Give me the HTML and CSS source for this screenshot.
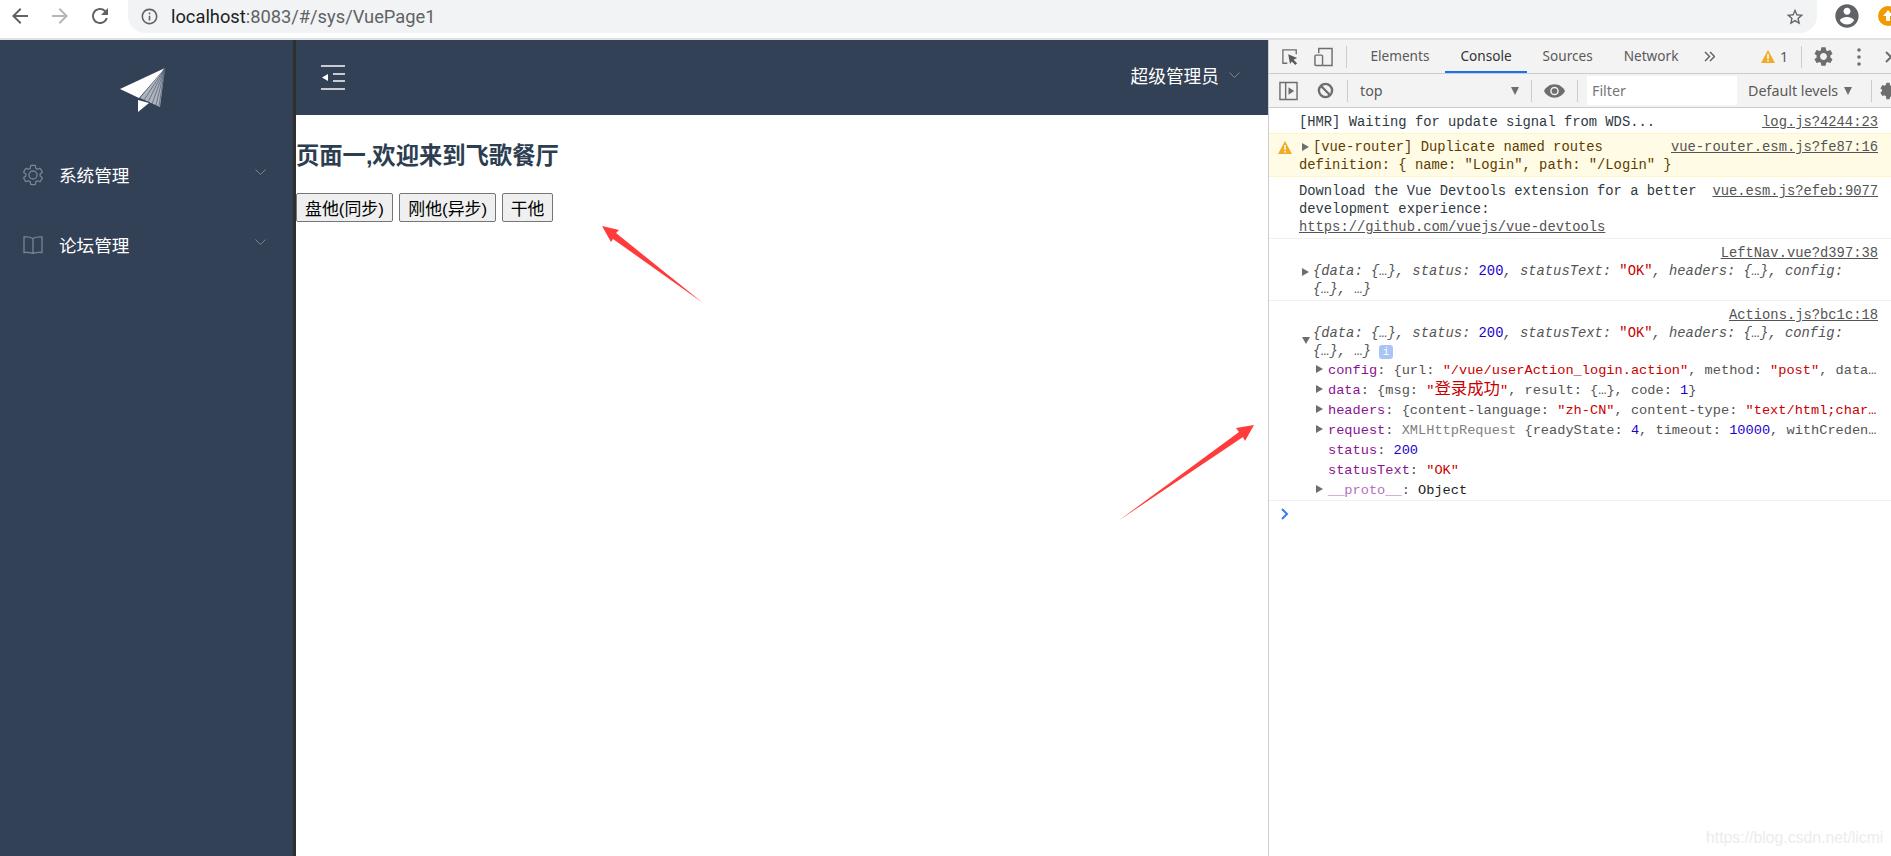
FILE: index.html
```html
<!DOCTYPE html>
<html lang="en">
<head>
    <meta charset="UTF-8">
    <title>VuePage1</title>
    <link rel="stylesheet" href="styles.css">
</head>
<body>

<div class="browser-bar">
    <svg class="nav-icon" viewBox="0 0 24 24"><path fill="#5f6368" d="M20 11H7.83l5.59-5.59L12 4l-8 8 8 8 1.41-1.41L7.83 13H20v-2z"/></svg>
    <svg class="nav-icon" viewBox="0 0 24 24"><path fill="#b4b7ba" d="M4 13h12.17l-5.59 5.59L12 20l8-8-8-8-1.41 1.41L16.17 11H4v2z"/></svg>
    <svg class="nav-icon" viewBox="0 0 24 24"><path fill="#5f6368" d="M17.65 6.35A7.958 7.958 0 0 0 12 4c-4.42 0-7.99 3.58-7.99 8s3.57 8 7.99 8c3.73 0 6.84-2.55 7.73-6h-2.08A5.99 5.99 0 0 1 12 18c-3.31 0-6-2.69-6-6s2.69-6 6-6c1.66 0 3.14.69 4.22 1.78L13 11h7V4l-2.35 2.35z"/></svg>
    <div class="address">
        <svg class="info-icon" viewBox="0 0 24 24"><path fill="#5f6368" d="M11 7h2v2h-2zm0 4h2v6h-2zm1-9C6.48 2 2 6.48 2 12s4.48 10 10 10 10-4.48 10-10S17.52 2 12 2zm0 18c-4.41 0-8-3.59-8-8s3.59-8 8-8 8 3.59 8 8-3.59 8-8 8z"/></svg>
        <span class="url"><span class="url-host">localhost</span>:8083/#/sys/VuePage1</span>
        <svg class="star-icon" viewBox="0 0 24 24"><path fill="#5f6368" d="M22 9.24l-7.19-.62L12 2 9.19 8.63 2 9.24l5.46 4.73L5.82 21 12 17.27 18.18 21l-1.63-7.03L22 9.24zM12 15.4l-3.76 2.27 1-4.28-3.32-2.88 4.38-.38L12 6.1l1.71 4.04 4.38.38-3.32 2.88 1 4.28L12 15.4z"/></svg>
    </div>
    <svg class="avatar" viewBox="0 0 24 24"><path fill="#5f6368" d="M12 2C6.48 2 2 6.48 2 12s4.48 10 10 10 10-4.48 10-10S17.52 2 12 2zm0 3c1.66 0 3 1.34 3 3s-1.34 3-3 3-3-1.34-3-3 1.34-3 3-3zm0 14.2c-2.5 0-4.71-1.28-6-3.22.03-1.99 4-3.08 6-3.08 1.99 0 5.97 1.09 6 3.08-1.29 1.94-3.5 3.22-6 3.22z"/></svg>
    <svg class="update-badge" viewBox="0 0 20 20"><circle cx="10" cy="10" r="10" fill="#f29900"/><path fill="#fff" d="M10 4l5 6h-3v5H8v-5H5z"/></svg>
</div>

<div class="window">
    <div class="app">
        <aside class="sidebar">
            <div class="logo">
                <svg width="46" height="46" viewBox="0 0 46 46">
                    <polygon fill="#fff" points="0,22 45,1 19,31"/>
                    <polygon fill="#fff" points="18,33 18,45 29,36"/>
                    <polygon fill="#aeb4bd" points="45,1 40,40 20,31"/>
                    <path stroke="#4c5a70" stroke-width=".7" d="M45 1L24 33M45 1L28 35M45 1L32 37M45 1L36 38M45 1L39 39"/>
                </svg>
            </div>
            <div class="menu-item">
                <svg class="menu-icon" viewBox="0 0 24 24"><path fill="none" stroke="#7a8492" stroke-width="1.3" d="M19.14 12.94c.04-.3.06-.61.06-.94 0-.32-.02-.64-.07-.94l2.03-1.58a.49.49 0 0 0 .12-.61l-1.92-3.32a.488.488 0 0 0-.59-.22l-2.39.96c-.5-.38-1.03-.7-1.62-.94l-.36-2.54a.484.484 0 0 0-.48-.41h-3.84c-.24 0-.43.17-.47.41l-.36 2.54c-.59.24-1.13.57-1.62.94l-2.39-.96c-.22-.08-.47 0-.59.22L2.74 8.87c-.12.21-.08.47.12.61l2.03 1.58c-.05.3-.09.63-.09.94s.02.64.07.94l-2.03 1.58a.49.49 0 0 0-.12.61l1.92 3.32c.12.22.37.29.59.22l2.39-.96c.5.38 1.03.7 1.62.94l.36 2.54c.05.24.24.41.48.41h3.84c.24 0 .44-.17.47-.41l.36-2.54c.59-.24 1.13-.56 1.62-.94l2.39.96c.22.08.47 0 .59-.22l1.92-3.32c.12-.22.07-.47-.12-.61l-2.01-1.58z"/><circle cx="12" cy="12" r="4" fill="none" stroke="#7a8492" stroke-width="1.3"/></svg>
                <span class="menu-label">系统管理</span>
                <svg class="chevron" viewBox="0 0 11 6"><path fill="none" stroke="#7a8492" d="M.5.5L5.5 5.5 10.500.5"/></svg>
            </div>
            <div class="menu-item">
                <svg class="menu-icon book" viewBox="0 0 20 18"><path fill="none" stroke="#7a8492" stroke-width="1.3" d="M10 2.500C7.500 1 4 .8 1 1v15.500c3-.2 6.500 0 9 1 2.500-1 6-1.200 9-1V1c-3-.2-6.500 0-9 1.500zm0 0v15"/></svg>
                <span class="menu-label">论坛管理</span>
                <svg class="chevron" viewBox="0 0 11 6"><path fill="none" stroke="#7a8492" d="M.5.5L5.5 5.5 10.500.5"/></svg>
            </div>
        </aside>
        <main class="main">
            <header class="app-header">
                <svg width="24" height="25" viewBox="0 0 24 25"><path stroke="#c8ccd2" stroke-width="2" d="M0 1h24M12 9h12M12 16h12M0 24h24"/><polygon fill="#fff" points="1,12.500 7,9 7,16"/></svg>
                <span class="user">超级管理员</span>
                <svg class="chevron" viewBox="0 0 11 6"><path fill="none" stroke="#7a8492" d="M.5.5L5.5 5.5 10.500.5"/></svg>
            </header>
            <h2 class="title">页面一,欢迎来到飞歌餐厅</h2>
            <div class="actions">
                <button>盘他(同步)</button>
                <button>刚他(异步)</button>
                <button>干他</button>
            </div>
        </main>
    </div>

    <div class="devtools">
        <div class="dt-tabs">
            <svg class="dt-icon inspect" viewBox="0 0 18 18"><path fill="none" stroke="#6e6e6e" stroke-width="1.500" d="M6 16H1V1h15v5"/><polygon fill="#5a5a5a" points="7,6 17,10 13,12 17,16 15,18 11,14 9,17"/></svg>
            <svg class="dt-icon device" viewBox="0 0 20 20"><path fill="none" stroke="#6e6e6e" stroke-width="1.500" d="M5 6V1h14v18H9"/><rect x="1" y="8" width="8" height="11" rx="1" fill="none" stroke="#6e6e6e" stroke-width="1.500"/></svg>
            <span class="dt-divider"></span>
            <span class="tab">Elements</span>
            <span class="tab active">Console</span>
            <span class="tab">Sources</span>
            <span class="tab">Network</span>
            <svg class="more" viewBox="0 0 11 11"><path fill="none" stroke="#5a5a5a" stroke-width="1.400" d="M1 1l4.500 4.500L1 10M6 1l4.500 4.500L6 10"/></svg>
            <svg class="warn-icon" viewBox="0 0 14 13"><polygon fill="#f2ab26" points="7,0 14,13 0,13"/><path stroke="#fff" stroke-width="1.500" d="M7 4v5M7 10v1.500"/></svg>
            <span class="warn-count">1</span>
            <span class="dt-divider"></span>
            <svg class="dt-gear" viewBox="0 0 24 24"><path fill="#6e6e6e" d="M19.14 12.94c.04-.3.06-.61.06-.94 0-.32-.02-.64-.07-.94l2.03-1.58a.49.49 0 0 0 .12-.61l-1.92-3.32a.488.488 0 0 0-.59-.22l-2.39.96c-.5-.38-1.03-.7-1.62-.94l-.36-2.54a.484.484 0 0 0-.48-.41h-3.84c-.24 0-.43.17-.47.41l-.36 2.54c-.59.24-1.13.57-1.62.94l-2.39-.96c-.22-.08-.47 0-.59.22L2.74 8.87c-.12.21-.08.47.12.61l2.03 1.58c-.05.3-.09.63-.09.94s.02.64.07.94l-2.03 1.58a.49.49 0 0 0-.12.61l1.92 3.32c.12.22.37.29.59.22l2.39-.96c.5.38 1.03.7 1.62.94l.36 2.54c.05.24.24.41.48.41h3.84c.24 0 .44-.17.47-.41l.36-2.54c.59-.24 1.13-.56 1.62-.94l2.39.96c.22.08.47 0 .59-.22l1.92-3.32c.12-.22.07-.47-.12-.61l-2.01-1.58zM12 15.6c-1.98 0-3.6-1.62-3.6-3.6s1.62-3.6 3.6-3.6 3.6 1.62 3.6 3.6-1.62 3.6-3.6 3.6z"/></svg>
            <svg class="dt-dots" viewBox="0 0 4 18"><circle cx="2" cy="2" r="1.800" fill="#6e6e6e"/><circle cx="2" cy="9" r="1.800" fill="#6e6e6e"/><circle cx="2" cy="16" r="1.800" fill="#6e6e6e"/></svg>
            <svg class="dt-close" viewBox="0 0 12 12"><path stroke="#6e6e6e" stroke-width="2" d="M1 1l10 10M11 1L1 11"/></svg>
        </div>
        <div class="dt-toolbar">
            <svg class="dt-icon sidebar-toggle" viewBox="0 0 20 20"><path fill="none" stroke="#6e6e6e" stroke-width="1.500" d="M1 1h18v18H1zM7 1v18"/><polygon fill="#6e6e6e" points="10,6 16,10 10,14"/></svg>
            <svg class="dt-icon clear" viewBox="0 0 18 18"><circle cx="9" cy="9" r="7" fill="none" stroke="#6e6e6e" stroke-width="2.500"/><path stroke="#6e6e6e" stroke-width="2.500" d="M4 4l10 10"/></svg>
            <span class="dt-divider"></span>
            <span class="context">top</span>
            <span class="caret caret-context"></span>
            <span class="dt-divider"></span>
            <svg class="eye" viewBox="0 0 22 14"><path fill="#6e6e6e" d="M11 0C6 0 2 3 0 7c2 4 6 7 11 7s9-3 11-7c-2-4-6-7-11-7z"/><circle cx="11" cy="7" r="4.500" fill="#f3f3f3"/><circle cx="11" cy="7" r="3" fill="#6e6e6e"/></svg>
            <span class="dt-divider"></span>
            <span class="filter">Filter</span>
            <span class="levels">Default levels</span>
            <span class="caret"></span>
            <span class="dt-divider"></span>
            <svg class="puzzle" viewBox="0 0 24 24"><path fill="#6e6e6e" d="M19.14 12.94c.04-.3.06-.61.06-.94 0-.32-.02-.64-.07-.94l2.03-1.58-2.400-4.150-2.390.96-2-1.150L14 2h-4l-.36 2.540-2 1.150-2.390-.96-2.400 4.150 2.030 1.580c-.05.3-.09.63-.09.94s.02.64.07.94l-2.030 1.580 2.400 4.150 2.390-.96 2 1.150L10 22h4l.36-2.540 2-1.150 2.390.96 2.400-4.150z"/></svg>
        </div>

        <div class="log">
            <div class="row row-first">
                <div class="line"><span>[HMR] Waiting for update signal from WDS...</span><span class="src">log.js?4244:23</span></div>
            </div>
            <div class="row row-warn">
                <svg class="warn-row-icon" viewBox="0 0 14 13"><polygon fill="#f2ab26" points="7,0 14,13 0,13"/><path stroke="#fff" stroke-width="1.500" d="M7 4v5M7 10v1.500"/></svg>
                <div class="line"><span class="warn-first"><i class="tri tri-warn"></i>[vue-router] Duplicate named routes</span><span class="src">vue-router.esm.js?fe87:16</span></div>
                <div class="line"><span>definition: { name: "Login", path: "/Login" }</span></div>
            </div>
            <div class="row">
                <div class="line"><span>Download the Vue Devtools extension for a better</span><span class="src">vue.esm.js?efeb:9077</span></div>
                <div class="line"><span>development experience:</span></div>
                <div class="line"><span class="link">https://github.com/vuejs/vue-devtools</span></div>
            </div>
            <div class="row row-obj">
                <div class="line line-end"><span class="src">LeftNav.vue?d397:38</span></div>
                <i class="tri tri-obj"></i>
                <div class="line obj"><span><span class="key-i">{data: {…}, status: </span><span class="num">200</span><span class="key-i">, statusText: </span><span class="str">"OK"</span><span class="key-i">, headers: {…}, config:</span></span></div>
                <div class="line obj"><span class="key-i">{…}, …}</span></div>
            </div>
            <div class="row row-open">
                <div class="line line-end"><span class="src">Actions.js?bc1c:18</span></div>
                <i class="tri-down"></i>
                <div class="line obj"><span><span class="key-i">{data: {…}, status: </span><span class="num">200</span><span class="key-i">, statusText: </span><span class="str">"OK"</span><span class="key-i">, headers: {…}, config:</span></span></div>
                <div class="line obj"><span class="key-i">{…}, …}</span><i class="info-badge">i</i></div>
                <div class="prop"><i class="tri"></i><span class="key">config</span>: {url: <span class="str">"/vue/userAction_login.action"</span>, method: <span class="str">"post"</span>, data…</div>
                <div class="prop"><i class="tri"></i><span class="key">data</span>: {msg: <span class="str">"<span class="cjk">登录成功</span>"</span>, result: {…}, code: <span class="num">1</span>}</div>
                <div class="prop"><i class="tri"></i><span class="key">headers</span>: {content-language: <span class="str">"zh-CN"</span>, content-type: <span class="str">"text/html;char…</span></div>
                <div class="prop"><i class="tri"></i><span class="key">request</span>: <span class="type">XMLHttpRequest</span> {readyState: <span class="num">4</span>, timeout: <span class="num">10000</span>, withCreden…</div>
                <div class="prop"><span class="key">status</span>: <span class="num">200</span></div>
                <div class="prop"><span class="key">statusText</span>: <span class="str">"OK"</span></div>
                <div class="prop"><i class="tri"></i><span class="key-dim">__proto__</span>: <span class="plain">Object</span></div>
            </div>
            <svg class="prompt" viewBox="0 0 8 12"><path fill="none" stroke="#367cf1" stroke-width="2" d="M1 1l5 5-5 5"/></svg>
        </div>
    </div>
</div>

<!-- red arrows drawn over the screenshot -->
<svg class="arrows" width="1891" height="856">
    <polygon fill="#ff3b3b" points="602,226 619,230 616,233 703,303 613,239 611,242"/>
    <polygon fill="#ff3b3b" points="1254,425 1236,428 1239,432 1118,521 1243,437 1245,441"/>
</svg>
<div class="watermark">https://blog.csdn.net/licmi</div>

</body>
</html>
```
FILE: styles.css
```css
html, body {
    margin: 0;
    padding: 0;
    height: 856px;
    overflow: hidden;
    background: #fff;
}
body {
    font-family: "Noto Sans", "Noto Sans CJK SC", sans-serif;
}
svg {
    display: block;
    flex: none;
}

/* browser chrome */
.browser-bar {
    height: 38px;
    display: flex;
    align-items: flex-start;
    gap: 16px;
    padding-left: 8px;
    overflow: hidden;
    box-sizing: border-box;
}
.nav-icon {
    width: 24px;
    height: 24px;
    margin-top: 4px;
}
.address {
    width: 1689px;
    height: 33px;
    flex: none;
    background: #f1f3f4;
    border-radius: 0 0 17px 17px;
    display: flex;
    align-items: center;
    padding: 0 12px;
    box-sizing: border-box;
    gap: 12px;
}
.info-icon {
    width: 19px;
    height: 19px;
}
.url {
    font-family: Roboto, sans-serif;
    font-size: 18.3px;
    color: #5f6368;
    flex: 1;
}
.url-host {
    color: #202124;
}
.star-icon {
    width: 20px;
    height: 20px;
}
.avatar {
    width: 28px;
    height: 28px;
    margin-top: 2px;
}
.update-badge {
    width: 20px;
    height: 20px;
    margin-top: 6px;
    margin-left: 1px;
}

.window {
    height: 818px;
    border-top: 2px solid #dee1e6;
    box-sizing: border-box;
    display: flex;
}

/* vue app */
.app {
    width: 1268px;
    display: flex;
    flex: none;
}
.sidebar {
    width: 296px;
    box-sizing: border-box;
    background: #334157;
    border-right: 3px solid #2f2f2f;
}
.logo {
    height: 75px;
    display: flex;
    justify-content: center;
    padding: 27px 7px 0 0;
    box-sizing: border-box;
    margin-bottom: 25px;
}
.menu-item {
    height: 70px;
    display: flex;
    align-items: center;
    padding-left: 21px;
    color: #fff;
}
.menu-icon {
    width: 24px;
    height: 24px;
}
.book {
    width: 20px;
    height: 18px;
    margin: 0 2px;
}
.menu-label {
    font-size: 17.6px;
    margin: -2px 0 0 14px;
    width: 196px;
}
.chevron {
    width: 11px;
    height: 6px;
    margin-top: -6px;
}
.main {
    flex: 1;
    min-width: 0;
}
.app-header {
    height: 75px;
    background: #334157;
    display: flex;
    align-items: center;
    padding-left: 25px;
    padding-right: 28px;
}
.user {
    color: #fff;
    font-size: 17.7px;
    margin: -6px 10px 0 auto;
}
.title {
    margin: 0;
    padding-top: 27px;
    font-size: 23.3px;
    line-height: 28px;
    color: #2c3e50;
    font-family: "Liberation Sans", "Noto Sans CJK SC", sans-serif;
}
.actions {
    display: flex;
    gap: 6.5px;
    margin-top: 23px;
}
.actions button {
    height: 29px;
    padding: 0 8px;
    font-size: 16.9px;
    font-family: "Liberation Sans", "Noto Sans CJK SC", sans-serif;
    background: #efefef;
    color: #000;
    border: 1px solid #767676;
    border-radius: 2px;
    white-space: nowrap;
}
.actions button:last-child {
    margin-left: -1px;
}

/* devtools */
.devtools {
    width: 623px;
    flex: none;
    border-left: 1px solid #ccc;
    box-sizing: border-box;
    color: #303942;
    overflow: hidden;
}
.dt-tabs, .dt-toolbar {
    display: flex;
    align-items: center;
    background: #f3f3f3;
    border-bottom: 1px solid #ccc;
    font-size: 14.3px;
    color: #5a5a5a;
    white-space: nowrap;
    height: 34px;
    box-sizing: border-box;
}
.dt-divider {
    width: 1px;
    height: 22px;
    background: #ccc;
    flex: none;
}
.dt-icon {
    flex: none;
}
.inspect {
    width: 16px;
    height: 18px;
    margin-left: 13px;
}
.device {
    width: 19px;
    height: 20px;
    margin-left: 16px;
    margin-right: 13px;
}
.tab {
    height: 33px;
    line-height: 32px;
    padding: 0 15.5px;
    box-sizing: border-box;
    flex: none;
    font-size: 13.6px;
}
.dt-divider + .tab {
    margin-left: 8px;
}
.tab.active {
    color: #333;
    border-bottom: 2px solid #1a73e8;
}
.more {
    width: 11px;
    height: 11px;
    margin-left: 10px;
}
.warn-icon {
    width: 14px;
    height: 13px;
    margin-left: 46px;
}
.warn-count {
    margin-left: 5px;
    margin-right: 13px;
    flex: none;
}
.dt-gear {
    width: 23px;
    height: 23px;
    margin-left: 10px;
}
.dt-dots {
    width: 4px;
    height: 18px;
    margin-left: 22px;
}
.dt-close {
    width: 12px;
    height: 12px;
    margin-left: 24px;
}
.sidebar-toggle {
    width: 19px;
    height: 20px;
    margin-left: 10px;
}
.clear {
    width: 17px;
    height: 17px;
    margin-left: 19px;
    margin-right: 13px;
}
.context {
    margin-left: 12px;
    width: 151px;
    flex: none;
}
.caret {
    width: 0;
    height: 0;
    border-left: 4.5px solid transparent;
    border-right: 4.5px solid transparent;
    border-top: 8px solid #6e6e6e;
    margin: 0 19px 0 6px;
    flex: none;
}
.caret-context {
    margin: 0 12px 0 0;
}
.eye {
    width: 21px;
    height: 14px;
    margin: 0 12px;
}
.filter {
    width: 150px;
    height: 29px;
    line-height: 29px;
    background: #fff;
    color: #777;
    padding-left: 5px;
    box-sizing: border-box;
    margin-left: 9px;
    margin-right: 11px;
    flex: none;
}
.levels {
    flex: none;
}
.puzzle {
    width: 20px;
    height: 20px;
    margin-left: 6px;
}

/* console output */
.log {
    font-family: "Liberation Mono", "Noto Sans CJK SC", monospace;
    font-size: 13.65px;
    position: relative;
    white-space: nowrap;
}
.row {
    position: relative;
    padding: 6px 13px 1px 30px;
    border-bottom: 1px solid #f0f0f0;
    box-sizing: border-box;
}
.row-first {
    height: 25px;
    border-bottom: 0;
}
.row-warn {
    height: 44px;
    background: #fffbe5;
    border-top: 1px solid #fff5c2;
    border-bottom: 1px solid #fff5c2;
    color: #5c3b00;
    padding-top: 5px;
}
.row-open {
    height: 200px;
    padding-bottom: 0;
}
.line {
    height: 18px;
    line-height: 18px;
    font-size: 13.8px;
    display: flex;
    justify-content: space-between;
}
.line-end {
    justify-content: flex-end;
}
.obj {
    margin-left: 14px;
    justify-content: flex-start;
}
.src {
    color: #545454;
    text-decoration: underline;
}
.link {
    color: #545454;
    text-decoration: underline;
}
.warn-first {
    padding-left: 3px;
}
.warn-row-icon {
    position: absolute;
    left: 9px;
    top: 7px;
    width: 14px;
    height: 13px;
}
.tri {
    display: inline-block;
    width: 0;
    height: 0;
    border-top: 4.5px solid transparent;
    border-bottom: 4.5px solid transparent;
    border-left: 7px solid #6e6e6e;
    margin-right: 5px;
}
.tri-warn {
    margin-right: 4px;
}
.tri-obj {
    position: absolute;
    left: 33px;
    top: 29px;
    margin: 0;
}
.tri-down {
    position: absolute;
    left: 33px;
    top: 36px;
    width: 0;
    height: 0;
    border-left: 4.5px solid transparent;
    border-right: 4.5px solid transparent;
    border-top: 7px solid #6e6e6e;
}
.key-i {
    font-style: italic;
}
.row-obj .key-i, .row-open .key-i {
    color: #545454;
}
.num {
    color: #1c00cf;
}
.str {
    color: #c80000;
}
.cjk {
    font-size: 16.4px;
    line-height: 0;
}
.key {
    color: #881391;
}
.key-dim {
    color: #b56fbd;
}
.type {
    color: #808080;
}
.plain {
    color: #222;
}
.prop {
    height: 20px;
    line-height: 20px;
    padding-left: 29px;
    position: relative;
    color: #545454;
}
.prop .tri {
    position: absolute;
    left: 17px;
    top: 4px;
    margin: 0;
}
.info-badge {
    display: inline-block;
    width: 14px;
    height: 14px;
    line-height: 14px;
    text-align: center;
    font-size: 11px;
    font-style: normal;
    color: #fff;
    background: #a9c4f5;
    border-radius: 3px;
    margin: 2px 0 0 8px;
}
.prompt {
    width: 8px;
    height: 12px;
    margin: 7px 0 0 12px;
}

/* overlays */
.arrows {
    position: absolute;
    left: 0;
    top: 0;
    pointer-events: none;
}
.watermark {
    position: absolute;
    left: 1706px;
    top: 829px;
    font-family: "Liberation Sans", sans-serif;
    font-size: 15.8px;
    color: #ececec;
    white-space: nowrap;
}
```
